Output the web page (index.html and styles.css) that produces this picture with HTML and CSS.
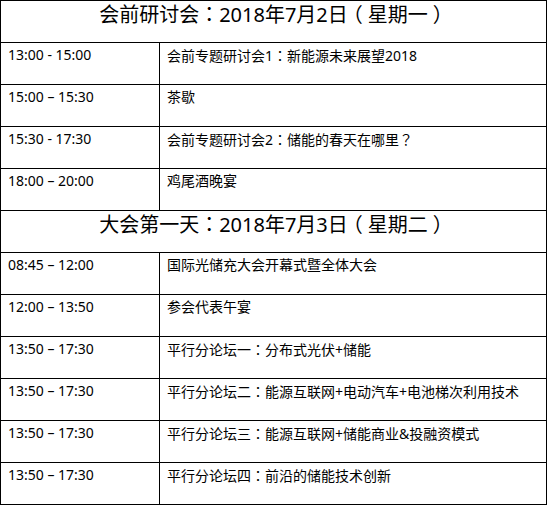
FILE: index.html
```html
<!DOCTYPE html>
<html lang="zh-CN">
<head>
<meta charset="utf-8">
<title>会议日程</title>
<link rel="stylesheet" href="styles.css">
</head>
<body>
<table class="agenda">
  <colgroup>
    <col class="col-time">
    <col class="col-topic">
  </colgroup>
  <tbody>
    <tr class="day"><td colspan="2">会前研讨会<span class="pu" lang="zh-TW">：</span>2018年7月2日<span class="pu po" lang="zh-TW">（</span>星期一<span class="pu pc" lang="zh-TW">）</span></td></tr>
    <tr><td>13:00 - 15:00</td><td>会前专题研讨会1<span class="pu" lang="zh-TW">：</span>新能源未来展望2018</td></tr>
    <tr><td>15:00 – 15:30</td><td>茶歇</td></tr>
    <tr><td>15:30 - 17:30</td><td>会前专题研讨会2<span class="pu" lang="zh-TW">：</span>储能的春天在哪里<span class="pu" lang="zh-TW">？</span></td></tr>
    <tr><td>18:00 – 20:00</td><td>鸡尾酒晚宴</td></tr>
    <tr class="day"><td colspan="2">大会第一天<span class="pu" lang="zh-TW">：</span>2018年7月3日<span class="pu po" lang="zh-TW">（</span>星期二<span class="pu pc" lang="zh-TW">）</span></td></tr>
    <tr><td>08:45 – 12:00</td><td>国际光储充大会开幕式暨全体大会</td></tr>
    <tr><td>12:00 – 13:50</td><td>参会代表午宴</td></tr>
    <tr><td>13:50 – 17:30</td><td>平行分论坛一<span class="pu" lang="zh-TW">：</span>分布式光伏+储能</td></tr>
    <tr><td>13:50 – 17:30</td><td>平行分论坛二<span class="pu" lang="zh-TW">：</span>能源互联网+电动汽车+电池梯次利用技术</td></tr>
    <tr><td>13:50 – 17:30</td><td>平行分论坛三<span class="pu" lang="zh-TW">：</span>能源互联网+储能商业&amp;投融资模式</td></tr>
    <tr><td>13:50 – 17:30</td><td>平行分论坛四<span class="pu" lang="zh-TW">：</span>前沿的储能技术创新</td></tr>
    <tr><td>&nbsp;</td><td>&nbsp;</td></tr>
  </tbody>
</table>
</body>
</html>
```

FILE: styles.css
```css
html, body {
  margin: 0;
  padding: 0;
  background: #fff;
}

.agenda {
  border-collapse: collapse;
  width: 547px;
  table-layout: fixed;
  font-family: "Noto Sans", "Noto Sans CJK SC", sans-serif;
  color: #000;
}

.col-time {
  width: 159px;
}

.agenda td {
  border: 1px solid #000;
  height: 42px;
  box-sizing: border-box;
  vertical-align: top;
  padding: 2px 7px 0 7px;
  font-size: 14px;
  line-height: 20px;
  white-space: nowrap;
}

.agenda tr.day td {
  text-align: center;
  font-size: 20px;
  line-height: 26px;
  padding: 0;
}

.pu {
  font-family: "Noto Sans CJK TC", "Noto Sans CJK SC", sans-serif;
}

.po {
  margin-left: -5px;
  margin-right: 5px;
}

.pc {
  margin-left: 5px;
  margin-right: -5px;
}
```
